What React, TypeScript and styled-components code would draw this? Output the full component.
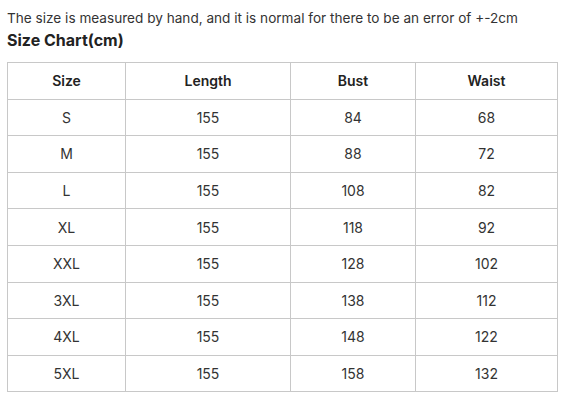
import React from "react";
import styled, { createGlobalStyle } from "styled-components";

const Global = createGlobalStyle`
  html, body { margin: 0; padding: 0; background: #ffffff; }
  body { font-family: Inter, "Noto Sans", Arial, sans-serif; color: #333; }
`;

const Page = styled.div`
  padding: 7px 6px 0 7px;
`;

const Note = styled.p`
  margin: 0;
  font-size: 13.6px;
  line-height: 23px;
  color: #333;
`;

const Title = styled.h2`
  margin: 0 0 12px 0;
  font-size: 16px;
  font-weight: 700;
  line-height: 20px;
  color: #222;
`;

const Table = styled.table`
  width: 550px;
  border-collapse: collapse;
  table-layout: fixed;
  font-size: 14px;
`;

const Th = styled.th`
  border: 1px solid #c8c8c8;
  height: 35.6px;
  padding: 0;
  font-weight: 600;
  color: #222;
  text-align: center;
`;

const Td = styled.td`
  border: 1px solid #c8c8c8;
  height: 35.6px;
  padding: 0;
  font-weight: 400;
  color: #333;
  text-align: center;
`;

const cols = [118, 165, 125, 142];
const headers = ["Size", "Length", "Bust", "Waist"];
const rows = [
  ["S", "155", "84", "68"],
  ["M", "155", "88", "72"],
  ["L", "155", "108", "82"],
  ["XL", "155", "118", "92"],
  ["XXL", "155", "128", "102"],
  ["3XL", "155", "138", "112"],
  ["4XL", "155", "148", "122"],
  ["5XL", "155", "158", "132"],
];

export default function App() {
  return (
    <Page>
      <Global />
      <Note>The size is measured by hand, and it is normal for there to be an error of +-2cm</Note>
      <Title>Size Chart(cm)</Title>
      <Table>
        <colgroup>
          {cols.map((w, i) => (
            <col key={i} style={{ width: w }} />
          ))}
        </colgroup>
        <thead>
          <tr>
            {headers.map((h) => (
              <Th key={h}>{h}</Th>
            ))}
          </tr>
        </thead>
        <tbody>
          {rows.map((r) => (
            <tr key={r[0]}>
              {r.map((c, i) => (
                <Td key={i}>{c}</Td>
              ))}
            </tr>
          ))}
        </tbody>
      </Table>
    </Page>
  );
}
